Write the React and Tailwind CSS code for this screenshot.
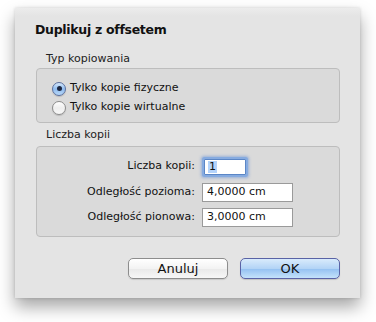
import React from "react";

const font = { fontFamily: '"DejaVu Sans", "Liberation Sans", sans-serif' };

function Radio({ checked, label }) {
  return (
    <div className="flex items-center h-[19px]">
      {checked ? (
        <span className="w-[14px] h-[14px] rounded-full border border-[#5a6f9e] bg-[linear-gradient(#d6e8fb,#8fbcef_50%,#b7d7f7)] flex items-center justify-center shadow-[0_1px_1px_rgba(0,0,0,0.15)]">
          <span className="w-[5px] h-[5px] rounded-full bg-[#1d2740]" />
        </span>
      ) : (
        <span className="w-[14px] h-[14px] rounded-full border border-[#8c8c8c] bg-[linear-gradient(#ffffff,#eeeeee_50%,#f8f8f8)] shadow-[0_1px_1px_rgba(0,0,0,0.15)]" />
      )}
      <span className="ml-[4px] text-[11px] text-[#111]">{label}</span>
    </div>
  );
}

export default function App() {
  return (
    <div className="w-[376px] h-[322px] bg-white pl-[15px] pt-[8px]" style={font}>
      <div className="w-[345px] h-[290px] bg-[linear-gradient(#ececec,#e4e4e4_8px,#e4e4e4)] shadow-[0_9px_16px_rgba(0,0,0,0.35),0_0_3px_rgba(0,0,0,0.15)] flex flex-col">
        <div className="pl-[20px] pt-[14px] h-[30px] text-[12.5px] tracking-[-0.3px] leading-[16px] font-bold text-[#111]">
          Duplikuj z offsetem
        </div>
        <div className="pl-[31px] mt-[14px] text-[11px] leading-[13px] text-[#222]">Typ kopiowania</div>
        <div className="ml-[21px] mt-[3px] w-[304px] h-[55px] rounded-[4px] bg-[#dadada] border border-[#bdbdbd] pl-[15px] pt-[10px] flex flex-col">
          <Radio checked label="Tylko kopie fizyczne" />
          <Radio label="Tylko kopie wirtualne" />
        </div>
        <div className="pl-[31px] mt-[5px] text-[11px] leading-[13px] text-[#222]">Liczba kopii</div>
        <div className="ml-[21px] mt-[5px] w-[304px] h-[91px] rounded-[4px] bg-[#dadada] border border-[#bdbdbd] pt-[9px]">
          <div className="grid grid-cols-[158px_auto] gap-x-[7px] gap-y-[6px] items-center text-[11px] text-[#111]">
            <div className="text-right pl-[4px] h-[21px] flex items-center justify-end">Liczba kopii:</div>
            <div className="pl-[2px] h-[21px] flex items-center">
              <div className="w-[42px] h-[16px] bg-white border border-[#5b86c6] shadow-[0_0_0_2px_#86abe0,0_0_3px_3px_rgba(110,150,215,0.6)] rounded-[1px] flex items-center pl-[3px]">
                <span className="bg-[#b4d3fb] leading-[12px] px-[1px]">1</span>
              </div>
            </div>
            <div className="text-right">Odległość pozioma:</div>
            <div className="w-[91px] h-[19px] bg-white border border-[#9a9a9a] flex items-center pl-[4px]">4,0000 cm</div>
            <div className="text-right">Odległość pionowa:</div>
            <div className="w-[91px] h-[19px] bg-white border border-[#9a9a9a] flex items-center pl-[4px]">3,0000 cm</div>
          </div>
        </div>
        <div className="flex justify-end gap-[12px] pr-[20px] mt-[21px]">
          <button className="w-[100px] h-[21px] rounded-[5px] border border-[#8d8d8d] bg-[linear-gradient(#ffffff,#f3f3f3_50%,#e9e9e9_51%,#f7f7f7)] text-[13px] text-[#111] shadow-[0_1px_1px_rgba(0,0,0,0.12)]">
            Anuluj
          </button>
          <button className="w-[100px] h-[21px] rounded-[5px] border border-[#5a63a6] bg-[linear-gradient(#d9ebfc,#b3d4f6_50%,#93c0f1_51%,#c4e2fb)] text-[13px] text-[#111] shadow-[0_1px_1px_rgba(0,0,0,0.15)]">
            OK
          </button>
        </div>
      </div>
    </div>
  );
}
